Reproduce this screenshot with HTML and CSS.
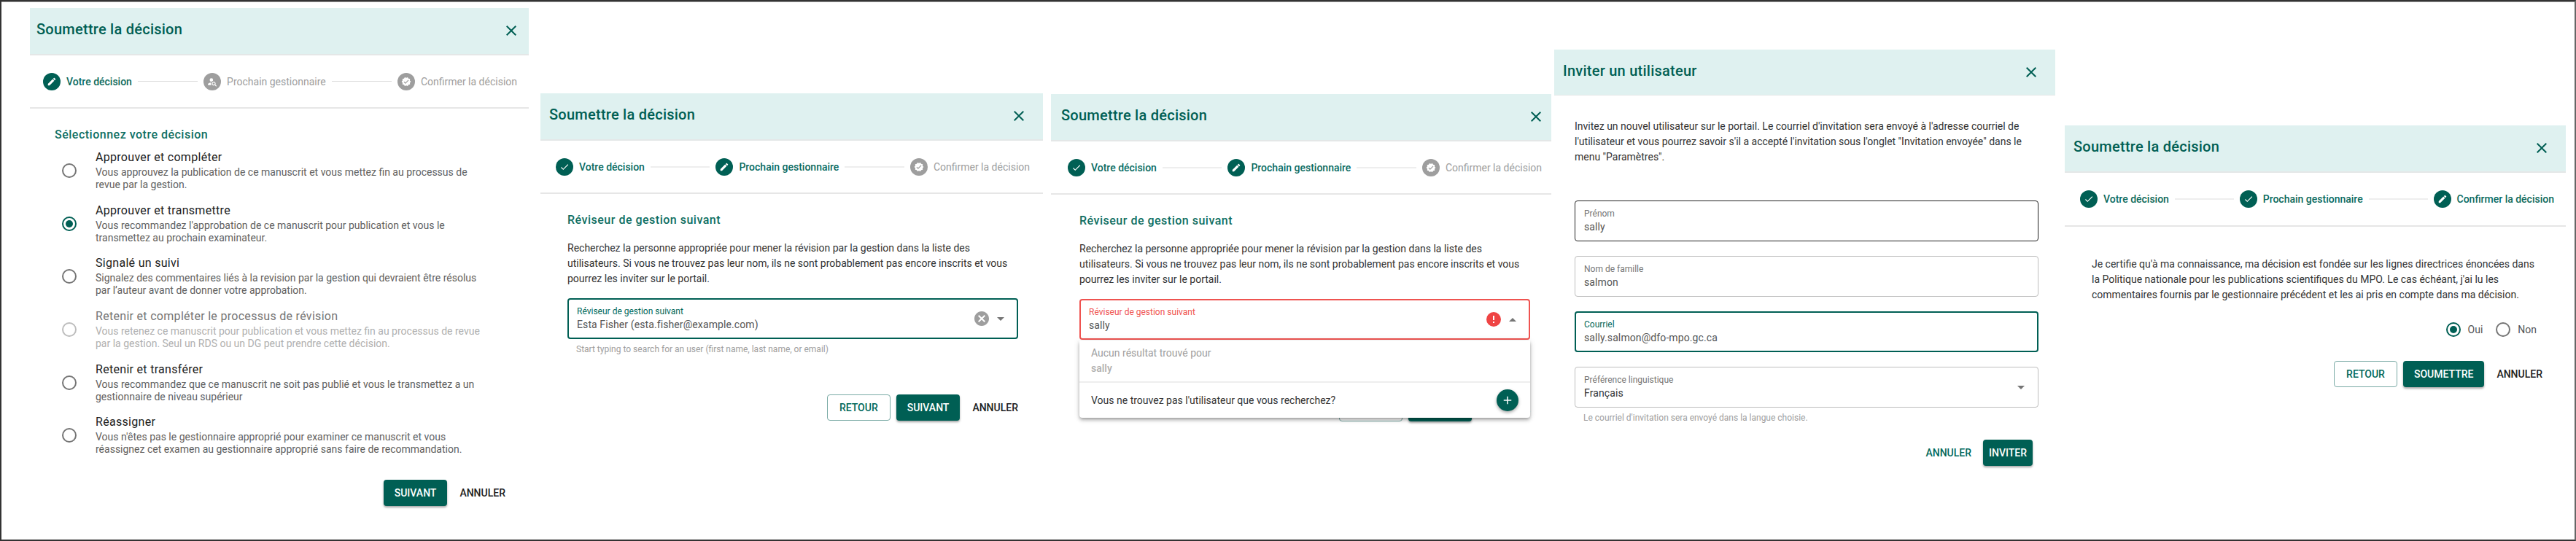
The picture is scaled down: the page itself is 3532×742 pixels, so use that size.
FILE: index.html
```html
<!DOCTYPE html>
<html lang="fr">
<head>
    <meta charset="UTF-8">
    <title>Soumettre la décision</title>
    <link rel="stylesheet" href="styles.css">
</head>
<body>

<!-- Icones partagees -->
<svg class="sprite" width="0" height="0">
    <symbol id="i-pencil" viewBox="0 0 24 24"><path d="M20.71,7.04C21.1,6.65 21.1,6 20.71,5.63L18.37,3.29C18,2.9 17.35,2.9 16.96,3.29L15.12,5.12L18.87,8.87M3,17.25V21H6.75L17.81,9.93L14.06,6.18L3,17.25Z"/></symbol>
    <symbol id="i-check" viewBox="0 0 24 24"><path d="M21,7L9,19L3.5,13.5L4.91,12.09L9,16.17L19.59,5.59L21,7Z"/></symbol>
    <symbol id="i-person" viewBox="0 0 24 24"><path d="M15.5,12C18,12 20,14 20,16.5C20,17.38 19.75,18.21 19.31,18.9L22.39,22L21,23.39L17.88,20.32C17.19,20.75 16.37,21 15.5,21C13,21 11,19 11,16.5C11,14 13,12 15.5,12M15.5,14A2.5,2.5 0 0,0 13,16.5A2.5,2.5 0 0,0 15.5,19A2.5,2.5 0 0,0 18,16.5A2.5,2.5 0 0,0 15.5,14M10,4A4,4 0 0,1 14,8C14,8.91 13.69,9.75 13.18,10.43C12.32,10.75 11.55,11.26 10.91,11.9L10,12A4,4 0 0,1 6,8A4,4 0 0,1 10,4M2,20V18C2,15.88 5.31,14.14 9.5,14C9.18,14.78 9,15.62 9,16.5C9,17.79 9.38,19 10,20H2Z"/></symbol>
    <symbol id="i-badge" viewBox="0 0 24 24"><path fill-rule="evenodd" d="M23,12L20.56,9.22L20.9,5.54L17.29,4.72L15.4,1.54L12,3L8.6,1.54L6.71,4.72L3.1,5.53L3.44,9.21L1,12L3.44,14.78L3.1,18.47L6.71,19.29L8.6,22.47L12,21L15.4,22.46L17.29,19.28L20.9,18.46L20.56,14.78L23,12M10,17L6,13L7.41,11.59L10,14.17L16.59,7.58L18,9L10,17Z"/></symbol>
    <symbol id="i-close" viewBox="0 0 14 14"><path d="M14,1.41L12.59,0L7,5.59L1.41,0L0,1.41L5.59,7L0,12.59L1.41,14L7,8.41L12.59,14L14,12.59L8.41,7Z"/></symbol>
    <symbol id="i-clear" viewBox="0 0 24 24"><path d="M12,2C17.53,2 22,6.47 22,12C22,17.53 17.53,22 12,22C6.47,22 2,17.53 2,12C2,6.47 6.47,2 12,2M15.59,7L12,10.59L8.41,7L7,8.41L10.59,12L7,15.59L8.41,17L12,13.41L15.59,17L17,15.59L13.41,12L17,8.41L15.59,7Z"/></symbol>
    <symbol id="i-alert" viewBox="0 0 24 24"><path d="M13,13H11V7H13M13,17H11V15H13M12,2A10,10 0 0,0 2,12A10,10 0 0,0 12,22A10,10 0 0,0 22,12A10,10 0 0,0 12,2Z"/></symbol>
    <symbol id="i-plus" viewBox="0 0 24 24"><path d="M19,13H13V19H11V13H5V11H11V5H13V11H19V13Z"/></symbol>
</svg>

<div class="page">

    <!-- Etape 1 : decision -->
    <section class="panneau p1">
        <header class="entete">
            <h2>Soumettre la décision</h2>
            <svg class="fermer"><use href="#i-close"/></svg>
        </header>
        <nav class="etapes">
            <span class="pastille"><svg><use href="#i-pencil"/></svg></span><span class="etiquette">Votre décision</span>
            <i class="trait"></i>
            <span class="pastille inactive"><svg><use href="#i-person"/></svg></span><span class="etiquette inactive">Prochain gestionnaire</span>
            <i class="trait"></i>
            <span class="pastille inactive"><svg><use href="#i-badge"/></svg></span><span class="etiquette inactive">Confirmer la décision</span>
        </nav>
        <div class="contenu">
            <h3 class="sous-titre">Sélectionnez votre décision</h3>
            <div class="choix">
                <span class="radio"></span>
                <div>
                    <div class="choix-titre">Approuver et compléter</div>
                    <div class="choix-texte">Vous approuvez la publication de ce manuscrit et vous mettez fin au processus de revue par la gestion.</div>
                </div>
            </div>
            <div class="choix">
                <span class="radio coche"></span>
                <div>
                    <div class="choix-titre">Approuver et transmettre</div>
                    <div class="choix-texte">Vous recommandez l'approbation de ce manuscrit pour publication et vous le transmettez au prochain examinateur.</div>
                </div>
            </div>
            <div class="choix">
                <span class="radio"></span>
                <div>
                    <div class="choix-titre">Signalé un suivi</div>
                    <div class="choix-texte">Signalez des commentaires liés à la revision par la gestion qui devraient être résolus par l’auteur avant de donner votre approbation.</div>
                </div>
            </div>
            <div class="choix desactive">
                <span class="radio"></span>
                <div>
                    <div class="choix-titre">Retenir et compléter le processus de révision</div>
                    <div class="choix-texte">Vous retenez ce manuscrit pour publication et vous mettez fin au processus de revue par la gestion. Seul un RDS ou un DG peut prendre cette décision.</div>
                </div>
            </div>
            <div class="choix">
                <span class="radio"></span>
                <div>
                    <div class="choix-titre">Retenir et transférer</div>
                    <div class="choix-texte">Vous recommandez que ce manuscrit ne soit pas publié et vous le transmettez a un gestionnaire de niveau supérieur</div>
                </div>
            </div>
            <div class="choix">
                <span class="radio"></span>
                <div>
                    <div class="choix-titre">Réassigner</div>
                    <div class="choix-texte">Vous n'êtes pas le gestionnaire approprié pour examiner ce manuscrit et vous réassignez cet examen au gestionnaire approprié sans faire de recommandation.</div>
                </div>
            </div>
            <div class="actions">
                <button class="btn plein">Suivant</button>
                <button class="btn texte">Annuler</button>
            </div>
        </div>
    </section>

    <!-- Etape 2 : gestionnaire choisi -->
    <section class="panneau p2">
        <header class="entete">
            <h2>Soumettre la décision</h2>
            <svg class="fermer"><use href="#i-close"/></svg>
        </header>
        <nav class="etapes">
            <span class="pastille"><svg><use href="#i-check"/></svg></span><span class="etiquette">Votre décision</span>
            <i class="trait"></i>
            <span class="pastille"><svg><use href="#i-pencil"/></svg></span><span class="etiquette">Prochain gestionnaire</span>
            <i class="trait"></i>
            <span class="pastille inactive"><svg><use href="#i-badge"/></svg></span><span class="etiquette inactive">Confirmer la décision</span>
        </nav>
        <div class="contenu">
            <h3 class="sous-titre">Réviseur de gestion suivant</h3>
            <p class="texte-intro">Recherchez la personne appropriée pour mener la révision par la gestion dans la liste des utilisateurs. Si vous ne trouvez pas leur nom, ils ne sont probablement pas encore inscrits et vous pourrez les inviter sur le portail.</p>
            <div class="champ actif">
                <div class="champ-valeurs">
                    <label>Réviseur de gestion suivant</label>
                    <div class="valeur">Esta Fisher (esta.fisher@example.com)</div>
                </div>
                <svg class="champ-icone gris"><use href="#i-clear"/></svg>
                <span class="fleche bas"></span>
            </div>
            <div class="aide">Start typing to search for an user (first name, last name, or email)</div>
            <div class="actions a-recherche">
                <button class="btn contour">Retour</button>
                <button class="btn plein">Suivant</button>
                <button class="btn texte">Annuler</button>
            </div>
        </div>
    </section>

    <!-- Etape 2 : aucun resultat -->
    <section class="panneau p3">
        <header class="entete">
            <h2>Soumettre la décision</h2>
            <svg class="fermer"><use href="#i-close"/></svg>
        </header>
        <nav class="etapes">
            <span class="pastille"><svg><use href="#i-check"/></svg></span><span class="etiquette">Votre décision</span>
            <i class="trait"></i>
            <span class="pastille"><svg><use href="#i-pencil"/></svg></span><span class="etiquette">Prochain gestionnaire</span>
            <i class="trait"></i>
            <span class="pastille inactive"><svg><use href="#i-badge"/></svg></span><span class="etiquette inactive">Confirmer la décision</span>
        </nav>
        <div class="contenu">
            <h3 class="sous-titre">Réviseur de gestion suivant</h3>
            <p class="texte-intro">Recherchez la personne appropriée pour mener la révision par la gestion dans la liste des utilisateurs. Si vous ne trouvez pas leur nom, ils ne sont probablement pas encore inscrits et vous pourrez les inviter sur le portail.</p>
            <div class="champ-zone">
                <div class="champ erreur">
                    <div class="champ-valeurs">
                        <label>Réviseur de gestion suivant</label>
                        <div class="valeur">sally</div>
                    </div>
                    <svg class="champ-icone rouge"><use href="#i-alert"/></svg>
                    <span class="fleche haut"></span>
                </div>
                <div class="menu">
                    <div class="menu-vide">
                        <div>Aucun résultat trouvé pour</div>
                        <strong>sally</strong>
                    </div>
                    <div class="menu-bas">
                        <span>Vous ne trouvez pas l'utilisateur que vous recherchez?</span>
                        <span class="fab"><svg><use href="#i-plus"/></svg></span>
                    </div>
                </div>
            </div>
            <div class="actions a-recherche a-sous-menu">
                <button class="btn contour">Retour</button>
                <button class="btn plein">Suivant</button>
                <button class="btn texte">Annuler</button>
            </div>
        </div>
    </section>

    <!-- Invitation -->
    <section class="panneau p4">
        <header class="entete">
            <h2>Inviter un utilisateur</h2>
            <svg class="fermer"><use href="#i-close"/></svg>
        </header>
        <div class="contenu">
            <p class="texte-intro">Invitez un nouvel utilisateur sur le portail. Le courriel d'invitation sera envoyé à l'adresse courriel de l'utilisateur et vous pourrez savoir s'il a accepté l'invitation sous l'onglet "Invitation envoyée" dans le menu "Paramètres".</p>
            <div class="champ survol">
                <div class="champ-valeurs">
                    <label>Prénom</label>
                    <div class="valeur">sally</div>
                </div>
            </div>
            <div class="champ">
                <div class="champ-valeurs">
                    <label>Nom de famille</label>
                    <div class="valeur">salmon</div>
                </div>
            </div>
            <div class="champ actif">
                <div class="champ-valeurs">
                    <label>Courriel</label>
                    <div class="valeur">sally.salmon@dfo-mpo.gc.ca</div>
                </div>
            </div>
            <div class="champ">
                <div class="champ-valeurs">
                    <label>Préférence linguistique</label>
                    <div class="valeur fonce">Français</div>
                </div>
                <span class="fleche bas"></span>
            </div>
            <div class="aide">Le courriel d'invitation sera envoyé dans la langue choisie.</div>
            <div class="actions a-invite">
                <button class="btn texte vert">Annuler</button>
                <button class="btn plein court">Inviter</button>
            </div>
        </div>
    </section>

    <!-- Etape 3 : confirmation -->
    <section class="panneau p5">
        <header class="entete">
            <h2>Soumettre la décision</h2>
            <svg class="fermer"><use href="#i-close"/></svg>
        </header>
        <nav class="etapes">
            <span class="pastille"><svg><use href="#i-check"/></svg></span><span class="etiquette">Votre décision</span>
            <i class="trait"></i>
            <span class="pastille"><svg><use href="#i-check"/></svg></span><span class="etiquette">Prochain gestionnaire</span>
            <i class="trait"></i>
            <span class="pastille"><svg><use href="#i-pencil"/></svg></span><span class="etiquette">Confirmer la décision</span>
        </nav>
        <div class="contenu">
            <p class="texte-intro">Je certifie qu'à ma connaissance, ma décision est fondée sur les lignes directrices énoncées dans la Politique nationale pour les publications scientifiques du MPO. Le cas échéant, j'ai lu les commentaires fournis par le gestionnaire précédent et les ai pris en compte dans ma décision.</p>
            <div class="oui-non">
                <span class="radio coche"></span><span class="oui-non-txt">Oui</span>
                <span class="radio"></span><span class="oui-non-txt">Non</span>
            </div>
            <div class="actions">
                <button class="btn contour">Retour</button>
                <button class="btn plein">Soumettre</button>
                <button class="btn texte">Annuler</button>
            </div>
        </div>
    </section>

</div>

</body>
</html>
```

FILE: styles.css
```css
* {
    box-sizing: border-box;
}
html, body {
    margin: 0;
    height: 100%;
    overflow: hidden;
    background: #fff;
}
body {
    font-family: Roboto, "Liberation Sans", sans-serif;
    color: #212121;
}
.sprite {
    position: absolute;
}

/* Page et panneaux */
.page {
    display: flex;
    align-items: flex-start;
    height: 742px;
    border: 2px solid #333;
    border-right-color: #666;
    box-shadow: inset 0 1px 0 #999;
    padding-left: 39px;
    overflow: hidden;
}
.panneau {
    flex: none;
}
.p1 { width: 684px; margin-top: 9px; }
.p2 { width: 689px; margin-top: 126px; margin-left: 16px; }
.p3 { width: 686px; margin-top: 127px; margin-left: 11px; }
.p4 { width: 687px; margin-top: 66px; margin-left: 4px; }
.p5 { width: 687px; margin-top: 170px; margin-left: 13px; }

/* En-tete */
.entete {
    display: flex;
    justify-content: space-between;
    height: 65px;
    padding: 16px 26px 0 12px;
    background: #dff1f0;
    border-bottom: 2px solid #e4e7e7;
}
.entete h2 {
    margin: 0;
    font-size: 20px;
    font-weight: 500;
    line-height: 26px;
    color: #005f54;
    letter-spacing: 0.25px;
}
.fermer {
    width: 14px;
    height: 14px;
    margin-top: 8px;
    fill: #005f54;
}
.p1 .entete { padding-left: 9px; padding-right: 17px; }
.p3 .entete { padding-left: 14px; padding-right: 14px; }
.p4 .entete { height: 63px; border-bottom-width: 1px; }

/* Etapes */
.etapes {
    display: flex;
    align-items: center;
    height: 73px;
    padding: 0 16px 0 21px;
    border-bottom: 2px solid #e6e6e6;
}
.p1 .etapes { padding-left: 18px; }
.p2 .etapes { padding-right: 18px; }
.p3 .etapes { padding-left: 23px; padding-right: 13px; }
.p5 .etapes { height: 74px; }
.pastille {
    flex: none;
    display: flex;
    align-items: center;
    justify-content: center;
    width: 24px;
    height: 24px;
    border-radius: 50%;
    background: #005f54;
    fill: #fff;
}
.pastille svg {
    width: 14px;
    height: 14px;
}
.pastille.inactive {
    background: #9e9e9e;
}
.etiquette {
    flex: none;
    margin-left: 8px;
    font-size: 14px;
    font-weight: 500;
    color: #0a6b5f;
}
.etiquette.inactive {
    font-weight: 400;
    color: #9e9e9e;
}
.trait {
    flex: 1;
    height: 1px;
    margin: 0 8px;
    background: #dcdcdc;
}
.p2 .trait, .p3 .trait, .p5 .trait {
    height: 2px;
    background: #eee;
}

/* Contenu */
.contenu {
    padding: 26px 34px 0 37px;
}
.p1 .contenu { padding-left: 34px; padding-right: 16px; }
.p3 .contenu { padding-left: 39px; padding-right: 29px; }
.p4 .contenu { padding: 32px 23px 0 28px; }
.p5 .contenu { padding-top: 41px; padding-right: 32px; }
.sous-titre {
    margin: 0 0 11px;
    font-size: 16px;
    font-weight: 500;
    line-height: 20px;
    color: #0f6f63;
    letter-spacing: 0.5px;
}
.texte-intro {
    margin: 0;
    font-size: 14px;
    line-height: 21px;
    color: #333;
}
.p2 .texte-intro, .p3 .texte-intro {
    margin-top: 18px;
    margin-bottom: 16px;
}
.p4 .texte-intro {
    margin-bottom: 49px;
}

/* Choix de decision */
.choix {
    display: flex;
    align-items: center;
    margin-bottom: 16.7px;
    padding-left: 10px;
}
.choix .radio {
    margin-right: 26px;
}
.radio {
    flex: none;
    display: flex;
    align-items: center;
    justify-content: center;
    width: 20px;
    height: 20px;
    border: 2px solid #757575;
    border-radius: 50%;
}
.radio.coche {
    border-color: #005f54;
}
.radio.coche::before {
    content: "";
    width: 10px;
    height: 10px;
    border-radius: 50%;
    background: #005f54;
}
.choix-titre {
    margin-bottom: 2px;
    font-size: 16px;
    line-height: 20px;
    letter-spacing: 0.3px;
}
.choix-texte {
    font-size: 14px;
    line-height: 17px;
    color: #616161;
    width: 545px;
}
.desactive .radio { border-color: #bdbdbd; }
.desactive .choix-titre { color: #757575; }
.desactive .choix-texte { color: #b0b0b0; }

/* Champs */
.champ {
    display: flex;
    align-items: center;
    height: 56px;
    margin-bottom: 20px;
    padding: 0 12px;
    border: 1px solid #bdbdbd;
    border-radius: 4px;
}
.champ.survol { border-color: #212121; }
.champ.actif { border: 2px solid #005f54; padding: 0 11px; }
.champ.erreur { border: 2px solid #ef5350; padding: 0 11px; margin-bottom: 0; }
.champ-valeurs {
    flex: 1;
}
.champ label {
    display: block;
    font-size: 12px;
    line-height: 16px;
    color: #757575;
}
.champ.actif label { color: #00695c; }
.champ.erreur label { color: #ef5350; }
.valeur {
    font-size: 14px;
    line-height: 21px;
    letter-spacing: 0.1px;
    color: #555;
}
.valeur.fonce { color: #333; }
.champ-icone {
    width: 24px;
    height: 24px;
    margin-right: 9px;
}
.champ-icone.gris { fill: #9e9e9e; }
.champ-icone.rouge { fill: #ef4444; }
.fleche {
    width: 0;
    height: 0;
    margin-right: 6px;
    border-left: 5px solid transparent;
    border-right: 5px solid transparent;
}
.fleche.bas { border-top: 5px solid #757575; }
.fleche.haut { border-bottom: 5px solid #757575; }
.aide {
    margin: -14px 0 0 12px;
    font-size: 12px;
    line-height: 16px;
    color: #9e9e9e;
}

/* Menu sous le champ */
.champ-zone {
    position: relative;
}
.menu {
    position: absolute;
    z-index: 2;
    top: 57px;
    left: 0;
    right: 0;
    height: 106px;
    background: #fff;
    border-radius: 0 0 4px 4px;
    box-shadow: 0 2px 4px -1px rgba(0,0,0,.3), 0 4px 5px rgba(0,0,0,.14), 0 1px 10px rgba(0,0,0,.12);
}
.menu-vide {
    height: 58px;
    padding: 7px 16px 0;
    font-size: 14px;
    line-height: 21px;
    color: #9e9e9e;
    border-bottom: 2px solid #eee;
}
.menu-vide strong {
    font-weight: 500;
    color: #b0b0b0;
}
.menu-bas {
    display: flex;
    align-items: center;
    justify-content: space-between;
    height: 48px;
    padding: 0 16px;
    font-size: 14px;
    color: #333;
}
.fab {
    display: flex;
    align-items: center;
    justify-content: center;
    width: 30px;
    height: 30px;
    border-radius: 50%;
    background: #005f54;
    fill: #fff;
    box-shadow: 0 2px 4px rgba(0,0,0,.35);
}
.fab svg {
    width: 18px;
    height: 18px;
}

/* Boutons */
.actions {
    display: flex;
    justify-content: flex-end;
    gap: 8px;
}
.p1 .actions { margin-top: 33px; }
.p5 .actions { margin-top: 33px; margin-right: -16px; }
.a-recherche { margin-top: 54px; margin-right: -16px; }
.a-sous-menu { margin-top: 76px; }
.a-invite { margin-top: 22px; margin-right: 8px; gap: 0; }
.btn {
    height: 36px;
    padding: 0 15px;
    border: none;
    border-radius: 4px;
    background: none;
    font-family: inherit;
    font-size: 14px;
    font-weight: 500;
    text-transform: uppercase;
    color: #212121;
}
.btn.plein {
    background: #005f54;
    color: #fff;
    box-shadow: 0 2px 3px rgba(0,0,0,.35);
}
.btn.contour {
    padding: 0 16px;
    border: 1px solid #7aaaa5;
    color: #00695c;
    background: #fff;
}
.btn.texte { padding: 0 16px; margin-left: -7px; }
.btn.vert { color: #00695c; margin: 0; }
.btn.court { padding: 0 8px; }
.oui-non {
    display: flex;
    align-items: center;
    justify-content: flex-end;
    margin-top: 27px;
    margin-right: 8px;
}
.oui-non-txt {
    margin-left: 10px;
    margin-right: 18px;
    font-size: 14px;
    color: #555;
}
.oui-non-txt:last-child {
    margin-right: 0;
}
```
